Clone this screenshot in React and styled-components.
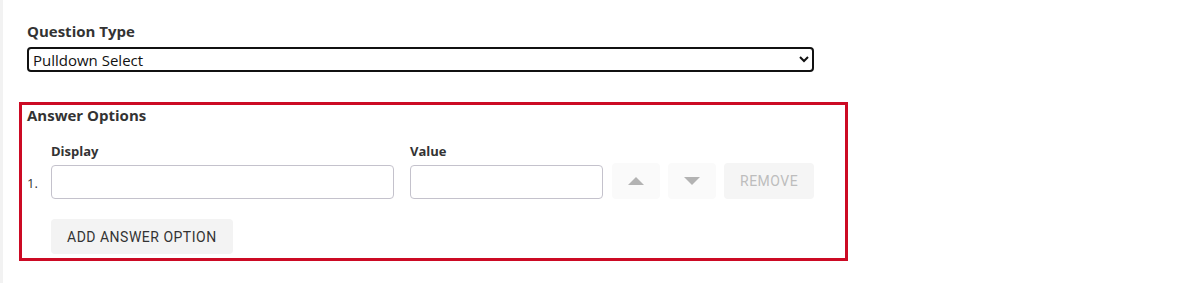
import React from "react";
import styled, { createGlobalStyle } from "styled-components";

const Global = createGlobalStyle`
  html, body { margin: 0; padding: 0; background: #fff; }
  body { font-family: "Open Sans", "Noto Sans", Arial, sans-serif; color: #333; }
  * { box-sizing: border-box; }
`;

const Page = styled.div`
  display: flex;
  min-height: 283px;
`;

const SideStrip = styled.div`
  width: 3px;
  flex: none;
  background: #f2f2f2;
`;

const Main = styled.main`
  flex: 1;
  padding: 20px 0 0 24px;
`;

const SectionLabel = styled.label`
  display: block;
  font-size: 15px;
  font-weight: 700;
  line-height: 22px;
  color: #333;
  margin: 0;
`;

const Select = styled.select`
  display: block;
  width: 787px;
  height: 25px;
  margin-top: 5px;
  border: 2px solid #111;
  border-radius: 4px;
  padding: 0 2px 0 0;
  font-family: "Open Sans", "Noto Sans", Arial, sans-serif;
  font-size: 15px;
  color: #111;
  background: #fff;
  outline: none;
`;

const OptionsBox = styled.section`
  width: 829px;
  margin: 30px 0 0 -8px;
  border: 3px solid #cc0a24;
  padding: 0 5px 4px 5px;
`;

const BoxTitle = styled.h3`
  margin: 0;
  font-size: 15px;
  font-weight: 700;
  line-height: 21px;
  color: #333;
`;

const OptionRow = styled.div`
  display: flex;
  align-items: flex-end;
  margin-top: 16px;
`;

const Index = styled.span`
  width: 24px;
  flex: none;
  font-size: 13px;
  line-height: 18px;
  padding-bottom: 7px;
  color: #333;
`;

const Field = styled.div`
  display: flex;
  flex-direction: column;
  gap: 5px;
  margin-right: ${(p) => p.$gap}px;
`;

const FieldLabel = styled.span`
  font-size: 13px;
  font-weight: 700;
  line-height: 18px;
  color: #333;
`;

const TextInput = styled.input`
  width: ${(p) => p.$w}px;
  height: 34px;
  border: 1px solid #c4c2cc;
  border-radius: 4px;
  padding: 0 8px;
  font-size: 14px;
  background: #fff;
  outline: none;
`;

const IconButton = styled.button`
  width: 48px;
  height: 36px;
  margin-right: 8px;
  border: none;
  border-radius: 4px;
  background: #fafafa;
  display: flex;
  align-items: center;
  justify-content: center;
  padding: 0;
  cursor: default;
`;

const TextButton = styled.button`
  height: ${(p) => p.$h}px;
  padding: 0 16px;
  border: none;
  border-radius: 4px;
  background: ${(p) => (p.$disabled ? "#f5f5f5" : "#f3f3f3")};
  color: ${(p) => (p.$disabled ? "#bdbdbd" : "#333")};
  font-family: Roboto, "Liberation Sans", Arial, sans-serif;
  font-size: 14px;
  font-weight: 400;
  letter-spacing: 0.5px;
  text-transform: uppercase;
  cursor: default;
`;

const AddRow = styled.div`
  padding: 20px 0 0 24px;
`;

const Triangle = ({ up }) => (
  <svg width="16" height="8" viewBox="0 0 16 8" aria-hidden="true">
    <path d={up ? "M0 8L8 0L16 8Z" : "M0 0L8 8L16 0Z"} fill="#b3b3b3" />
  </svg>
);

export default function App() {
  return (
    <>
      <Global />
      <Page>
        <SideStrip />
        <Main>
          <SectionLabel htmlFor="qtype">Question Type</SectionLabel>
          <Select id="qtype" defaultValue="pulldown">
            <option value="pulldown">Pulldown Select</option>
            <option value="radio">Radio Buttons</option>
            <option value="text">Text</option>
          </Select>
          <OptionsBox>
            <BoxTitle>Answer Options</BoxTitle>
            <OptionRow>
              <Index>1.</Index>
              <Field $gap={16}>
                <FieldLabel>Display</FieldLabel>
                <TextInput $w={343} />
              </Field>
              <Field $gap={9}>
                <FieldLabel>Value</FieldLabel>
                <TextInput $w={193} />
              </Field>
              <IconButton aria-label="Move up">
                <Triangle up />
              </IconButton>
              <IconButton aria-label="Move down">
                <Triangle />
              </IconButton>
              <TextButton $disabled $h={36}>Remove</TextButton>
            </OptionRow>
            <AddRow>
              <TextButton $h={35}>Add Answer Option</TextButton>
            </AddRow>
          </OptionsBox>
        </Main>
      </Page>
    </>
  );
}
